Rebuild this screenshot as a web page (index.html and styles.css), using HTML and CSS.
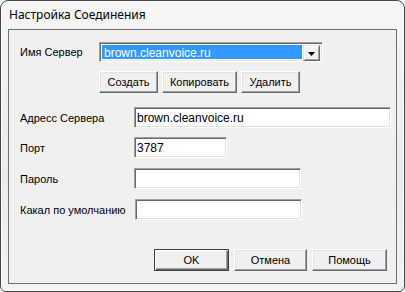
FILE: index.html
```html
<!DOCTYPE html>
<html lang="ru">

<head>
    <meta charset="UTF-8">
    <meta name="viewport" content="width=device-width, initial-scale=1.0">
    <title>Настройка Соединения</title>
    <link rel="stylesheet" href="styles.css">
</head>

<body>
    <div class="window">
        <div class="titlebar">Настройка Соединения</div>
        <div class="client">
            <div class="row row-server">
                <span class="label">Имя Сервер</span>
                <div class="combo">
                    <span class="combo-value">brown.cleanvoice.ru</span>
                    <span class="combo-btn">
                        <svg width="7" height="4" viewBox="0 0 7 4"><path d="M0 0h7L3.5 4z" fill="#000"/></svg>
                    </span>
                </div>
            </div>
            <div class="row btn-row">
                <button class="btn btn-create">Создать</button>
                <button class="btn btn-copy">Копировать</button>
                <button class="btn btn-delete">Удалить</button>
            </div>
            <div class="row field row-addr">
                <label class="label" for="addr">Адресс Сервера</label>
                <input class="edit edit-addr" id="addr" type="text" value="brown.cleanvoice.ru">
            </div>
            <div class="row field row-port">
                <label class="label" for="port">Порт</label>
                <input class="edit edit-port" id="port" type="text" value="3787">
            </div>
            <div class="row field row-pass">
                <label class="label" for="pass">Пароль</label>
                <input class="edit edit-pass" id="pass" type="password">
            </div>
            <div class="row field row-channel">
                <label class="label" for="channel">Какал по умолчанию</label>
                <input class="edit edit-channel" id="channel" type="text">
            </div>
            <div class="dialog-buttons">
                <button class="btn btn-ok">OK</button>
                <button class="btn btn-cancel">Отмена</button>
                <button class="btn btn-help">Помощь</button>
            </div>
        </div>
    </div>
</body>

</html>
```

FILE: styles.css
```css
html,
body {
    margin: 0;
    padding: 0;
    background: #ffffff;
}

body {
    font-family: "Liberation Sans", Arial, sans-serif;
    font-size: 11px;
    color: #000;
}

.window {
    width: 405px;
    height: 292px;
    box-sizing: border-box;
    border: 1px solid #464646;
    border-radius: 8px 8px 6px 6px;
    padding: 0 7px 7px 7px;
    background: linear-gradient(#f6f6f6, #ebebeb 60%, #f3f3f3);
    box-shadow: inset 0 0 0 1px #fbfbfb;
}

.titlebar {
    height: 28px;
    box-sizing: border-box;
    padding: 6px 0 0 1px;
    line-height: 16px;
    font-family: "Noto Sans", "Open Sans", sans-serif;
    font-size: 12px;
    color: #000;
}

.client {
    height: 255px;
    box-sizing: border-box;
    border: 1px solid #6e6e6e;
    background: #f0f0f0;
    display: flex;
    flex-direction: column;
}

.row {
    display: flex;
    align-items: center;
    padding-left: 11px;
}

.label {
    flex: none;
    width: 114px;
}

.row-server {
    margin-top: 12px;
}

.row-server .label {
    width: 79px;
}

/* sunken 3D frame */
.combo,
.edit {
    box-sizing: border-box;
    border: 1px solid;
    border-color: #a0a0a0 #ffffff #ffffff #a0a0a0;
    box-shadow: inset 1px 1px #696969, inset -1px -1px #e3e3e3;
    background: #ffffff;
}

.combo {
    width: 224px;
    height: 20px;
    display: flex;
    padding: 2px;
}

.combo-value {
    flex: 1;
    margin: 0 1px 0 0;
    padding-left: 2px;
    background: #3399ff;
    color: #ffffff;
    line-height: 16px;
    font-size: 12px;
}

.combo-btn {
    width: 17px;
    height: 16px;
    box-sizing: border-box;
    display: flex;
    align-items: center;
    justify-content: center;
    background: #f0f0f0;
    border: 1px solid;
    border-color: #e3e3e3 #696969 #696969 #e3e3e3;
    box-shadow: inset 1px 1px #ffffff, inset -1px -1px #a0a0a0;
    padding-top: 1px;
}

/* raised 3D buttons */
.btn {
    box-sizing: border-box;
    height: 22px;
    padding: 0;
    font-family: "Liberation Sans", Arial, sans-serif;
    font-size: 11px;
    color: #000;
    background: #f0f0f0;
    border: 1px solid;
    border-color: #ffffff #696969 #696969 #ffffff;
    box-shadow: inset -1px -1px #a0a0a0, inset 1px 1px #e3e3e3;
    border-radius: 0;
}

.btn-row {
    margin-top: 9px;
    padding-left: 90px;
    gap: 4px;
}

.btn-create {
    width: 59px;
}

.btn-copy {
    width: 75px;
}

.btn-delete {
    width: 59px;
}

.edit {
    height: 21px;
    padding: 0 2px;
    font-family: "Liberation Sans", Arial, sans-serif;
    font-size: 12px;
    color: #000;
    outline: none;
}

.row-addr {
    margin-top: 14px;
}

.edit-addr {
    width: 257px;
}

.row-port {
    margin-top: 9px;
}

.edit-port {
    width: 93px;
}

.row-pass {
    margin-top: 10px;
}

.edit-pass {
    width: 167px;
}

.row-channel {
    margin-top: 10px;
}

.row-channel .label {
    width: 115px;
}

.edit-channel {
    width: 167px;
}

.dialog-buttons {
    margin-top: 29px;
    display: flex;
    justify-content: flex-end;
    gap: 5px;
    padding-right: 9px;
}

.btn-ok {
    width: 75px;
    border-color: #404040;
    box-shadow: inset 1px 1px #ffffff, inset -1px -1px #696969, inset -2px -2px #a0a0a0;
}

.btn-cancel {
    width: 73px;
}

.btn-help {
    width: 75px;
}
```
